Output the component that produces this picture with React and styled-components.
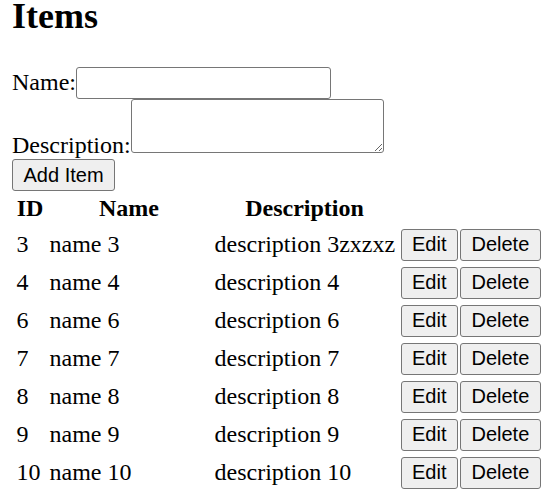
import React from "react";
import styled, { createGlobalStyle } from "styled-components";

const GlobalStyle = createGlobalStyle`
  html, body {
    margin: 0;
    padding: 0;
    background: #ffffff;
  }
  body {
    font-family: "Liberation Serif", "Times New Roman", serif;
    font-size: 24px;
    color: #000000;
  }
`;

const Page = styled.div`
  padding: 0 0 0 12px;
`;

const Title = styled.h1`
  margin: 0 0 37px 0;
  padding-top: 2px;
  font-size: 36px;
  line-height: 28px;
  font-weight: bold;
`;

const Form = styled.form`
  margin: 0;
`;

const FieldLine = styled.div`
  display: block;
`;

const Label = styled.label``;

const controlBase = `
  font-family: "Liberation Sans", Arial, sans-serif;
  font-size: 20px;
  box-sizing: border-box;
  border: 1px solid #767676;
  border-radius: 3px;
  background: #ffffff;
  color: #000000;
  margin: 0;
  vertical-align: baseline;
`;

const TextInput = styled.input`
  ${controlBase}
  width: 255px;
  height: 32px;
  padding: 0 3px;
`;

const TextArea = styled.textarea`
  ${controlBase}
  width: 253px;
  height: 54px;
  padding: 3px;
  font-family: "Liberation Mono", monospace;
  font-size: 20px;
`;

const Button = styled.button`
  font-family: "Liberation Sans", Arial, sans-serif;
  font-size: 20px;
  box-sizing: border-box;
  height: 32px;
  padding: 0 10.5px;
  margin: 0;
  border: 1px solid #767676;
  border-radius: 3px;
  background: #efefef;
  color: #000000;
  vertical-align: baseline;
  & + & {
    margin-left: 2px;
  }
`;

const Table = styled.table`
  border-collapse: separate;
  border-spacing: 3px;
  table-layout: fixed;
  width: 534px;
`;

const HeadCell = styled.th`
  width: ${(p) => p.$w}px;
  padding: 0.5px 1.5px 2.5px 1.5px;
  font-weight: bold;
  text-align: center;
  line-height: 27px;
`;

const Cell = styled.td`
  padding: 1.5px;
  text-align: left;
  white-space: nowrap;
`;

const items = [
  { id: 3, name: "name 3", description: "description 3zxzxz" },
  { id: 4, name: "name 4", description: "description 4" },
  { id: 6, name: "name 6", description: "description 6" },
  { id: 7, name: "name 7", description: "description 7" },
  { id: 8, name: "name 8", description: "description 8" },
  { id: 9, name: "name 9", description: "description 9" },
  { id: 10, name: "name 10", description: "description 10" },
];

export default function App() {
  return (
    <Page>
      <GlobalStyle />
      <Title>Items</Title>
      <Form onSubmit={(e) => e.preventDefault()}>
        <FieldLine>
          <Label htmlFor="name">Name:</Label>
          <TextInput id="name" type="text" />
        </FieldLine>
        <FieldLine>
          <Label htmlFor="description">Description:</Label>
          <TextArea id="description" />
        </FieldLine>
        <FieldLine>
          <Button type="submit">Add Item</Button>
        </FieldLine>
      </Form>
      <Table>
        <thead>
          <tr>
            <HeadCell $w={27}>ID</HeadCell>
            <HeadCell $w={159}>Name</HeadCell>
            <HeadCell $w={180}>Description</HeadCell>
            <HeadCell $w={141}></HeadCell>
          </tr>
        </thead>
        <tbody>
          {items.map((item) => (
            <tr key={item.id}>
              <Cell>{item.id}</Cell>
              <Cell>{item.name}</Cell>
              <Cell>{item.description}</Cell>
              <Cell>
                <Button type="button">Edit</Button>
                <Button type="button">Delete</Button>
              </Cell>
            </tr>
          ))}
        </tbody>
      </Table>
    </Page>
  );
}
